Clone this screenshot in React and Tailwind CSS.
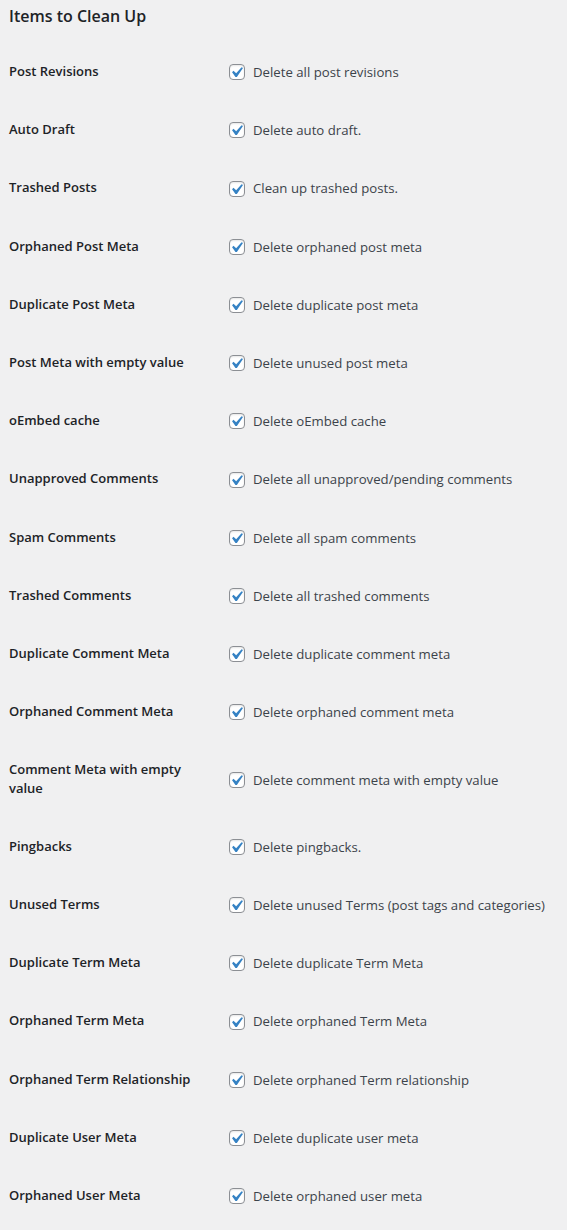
const items = [
    ["Post Revisions", "Delete all post revisions"],
    ["Auto Draft", "Delete auto draft."],
    ["Trashed Posts", "Clean up trashed posts."],
    ["Orphaned Post Meta", "Delete orphaned post meta"],
    ["Duplicate Post Meta", "Delete duplicate post meta"],
    ["Post Meta with empty value", "Delete unused post meta"],
    ["oEmbed cache", "Delete oEmbed cache"],
    ["Unapproved Comments", "Delete all unapproved/pending comments"],
    ["Spam Comments", "Delete all spam comments"],
    ["Trashed Comments", "Delete all trashed comments"],
    ["Duplicate Comment Meta", "Delete duplicate comment meta"],
    ["Orphaned Comment Meta", "Delete orphaned comment meta"],
    ["Comment Meta with empty value", "Delete comment meta with empty value"],
    ["Pingbacks", "Delete pingbacks."],
    ["Unused Terms", "Delete unused Terms (post tags and categories)"],
    ["Duplicate Term Meta", "Delete duplicate Term Meta"],
    ["Orphaned Term Meta", "Delete orphaned Term Meta"],
    ["Orphaned Term Relationship", "Delete orphaned Term relationship"],
    ["Duplicate User Meta", "Delete duplicate user meta"],
    ["Orphaned User Meta", "Delete orphaned user meta"],
];

function CheckBox() {

    // wp-admin style checkbox with the blue tick
    return (
        <span className="relative inline-block w-4 h-4 shrink-0 rounded-[4px] border border-[#8c8f94] bg-white shadow-[inset_0_1px_2px_rgba(0,0,0,0.1)]">
            <svg
                viewBox="0 0 20 20"
                className="absolute w-[21px] h-[21px] left-[-4px] top-[-3px]"
            >
                <path
                    d="M14.83 4.89l1.34.94-5.81 8.38H9.02L5.78 9.67l1.34-1.25 2.57 2.4z"
                    fill="#3582c4"
                />
            </svg>
        </span>
    );
}

export default function App() {

    return (

        <div
            className="min-h-[1230px] bg-[#f0f0f1] pl-[9px] pt-[4px]"
            style={{ fontFamily: '"Open Sans", "Noto Sans", sans-serif' }}
        >

            <h2 className="text-[16px] leading-[24px] font-semibold text-[#1d2327] mb-[14px]">
                Items to Clean Up
            </h2>

            <div>

                {
                    items.map(([label, desc]) => (

                        <div key={label} className="flex">

                            <div className="w-[210px] shrink-0 pr-[10px] py-[20px] text-[13px] leading-[18.2px] font-semibold text-[#1d2327]">
                                {label}
                            </div>

                            <div className="flex items-center px-[10px] pt-[16px] pb-[14px]">

                                <label className="flex items-center text-[13.2px] leading-[18.2px] text-[#3c434a]">

                                    <CheckBox />

                                    <span className="ml-[8px]">
                                        {desc}
                                    </span>

                                </label>

                            </div>

                        </div>

                    ))
                }

            </div>

        </div>

    );

}
